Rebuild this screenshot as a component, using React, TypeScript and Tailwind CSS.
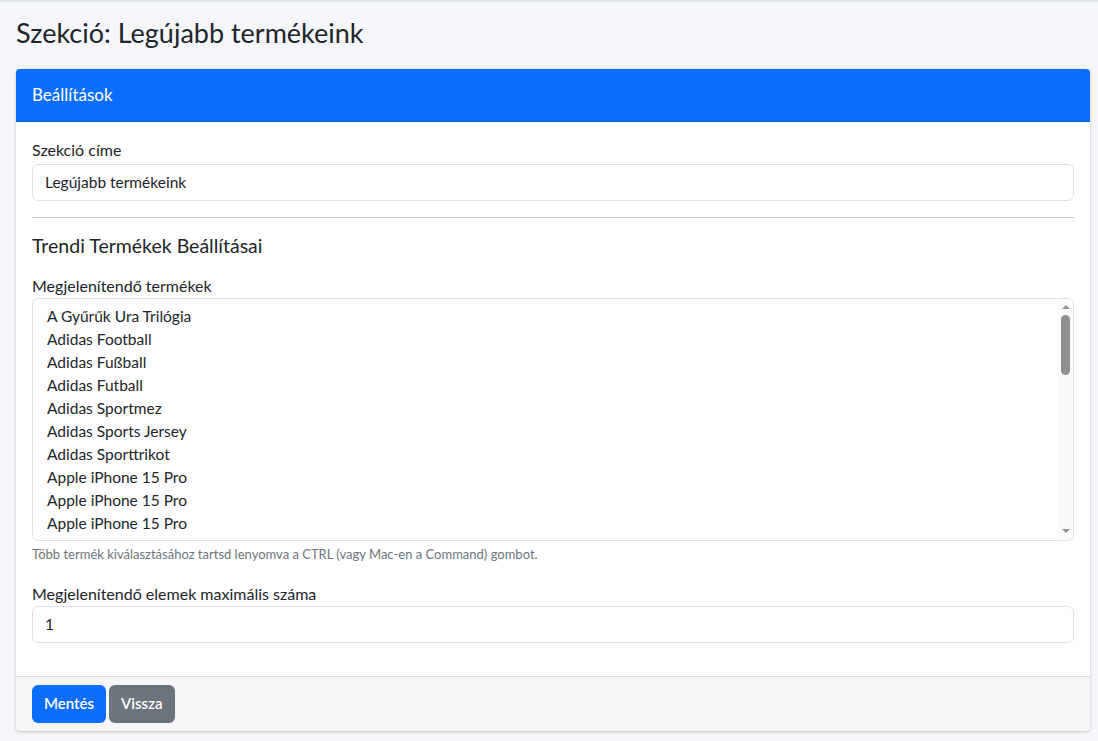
const products = [
  'A Gyűrűk Ura Trilógia',
  'Adidas Football',
  'Adidas Fußball',
  'Adidas Futball',
  'Adidas Sportmez',
  'Adidas Sports Jersey',
  'Adidas Sporttrikot',
  'Apple iPhone 15 Pro',
  'Apple iPhone 15 Pro',
  'Apple iPhone 15 Pro',
  'Az Utolsó Kívánság Trilógia',
];

function Scrollbar() {
  return (
    <div className="w-[15px] shrink-0 bg-[#fafafa] flex flex-col items-center pt-[6px] pb-[7px]">
      <div className="w-0 h-0 border-x-[4px] border-x-transparent border-b-[4px] border-b-[#8f8f8f]" />
      <div className="mt-[6px] w-[9px] h-[60px] rounded-full bg-[#8f8f8f]" />
      <div className="flex-1" />
      <div className="w-0 h-0 border-x-[4px] border-x-transparent border-t-[4px] border-t-[#8f8f8f]" />
    </div>
  );
}

export default function App() {
  return (
    <div className="min-h-[741px] bg-[#f4f6f9] border-t-2 border-[#dee2e6] font-['Lato',sans-serif] text-[#212529]">
      <div className="pl-4 pr-2 pt-[14px] pb-[18px]">
        <h1 className="text-[27px] leading-[34.6px] font-normal m-0">
          Szekció: Legújabb termékeink
        </h1>
      </div>
      <div className="ml-4 mr-2 bg-white rounded shadow-[0_0_1px_rgba(0,0,0,0.125),0_1px_3px_rgba(0,0,0,0.2)] overflow-hidden">
        <div className="h-[53px] flex items-center px-4 bg-[#0d6efd] border-b border-[#0b5ed7] text-white text-[17px]">
          Beállítások
        </div>
        <div className="px-4 pt-4 pb-[17px]">
          <label className="block leading-6 text-base mb-[2px]">Szekció címe</label>
          <input
            type="text"
            defaultValue="Legújabb termékeink"
            className="block w-full h-[37px] px-3 border border-[#dee2e6] rounded-md text-[15.5px] outline-none"
          />
          <hr className="my-4 border-t border-[#c8c9ca]" />
          <h5 className="text-[19.5px] leading-6 mb-[16px]">
            Trendi Termékek Beállításai
          </h5>
          <label className="block leading-6 text-base">
            Megjelenítendő termékek
          </label>
          <div className="flex h-[243px] border border-[#dee2e6] rounded-md overflow-hidden">
            <ul className="flex-1 overflow-hidden pt-[6px] pl-[14px] text-[15.5px]">
              {products.map((p, i) => (
                <li key={i} className="h-[23px] leading-[23px] whitespace-nowrap">
                  {p}
                </li>
              ))}
            </ul>
            <Scrollbar />
          </div>
          <div className="mt-[3px] text-[13px] leading-5 text-[#6c757d]">
            Több termék kiválasztásához tartsd lenyomva a CTRL (vagy Mac-en a
            Command) gombot.
          </div>
          <label className="block mt-[18px] leading-6 text-base">
            Megjelenítendő elemek maximális száma
          </label>
          <input
            type="number"
            defaultValue={1}
            className="block w-full h-[37px] px-3 border border-[#dee2e6] rounded-md text-[15.5px] outline-none mb-4"
          />
        </div>
        <div className="flex gap-[3px] px-4 pt-2 pb-2 bg-[#f7f7f7] border-t border-[#dcdcdc]">
          <button className="h-[38px] px-3 rounded-md bg-[#0d6efd] text-white font-semibold text-[15px]">
            Mentés
          </button>
          <button className="h-[38px] px-3 rounded-md bg-[#6c757d] text-white font-semibold text-[15px]">
            Vissza
          </button>
        </div>
      </div>
    </div>
  );
}
